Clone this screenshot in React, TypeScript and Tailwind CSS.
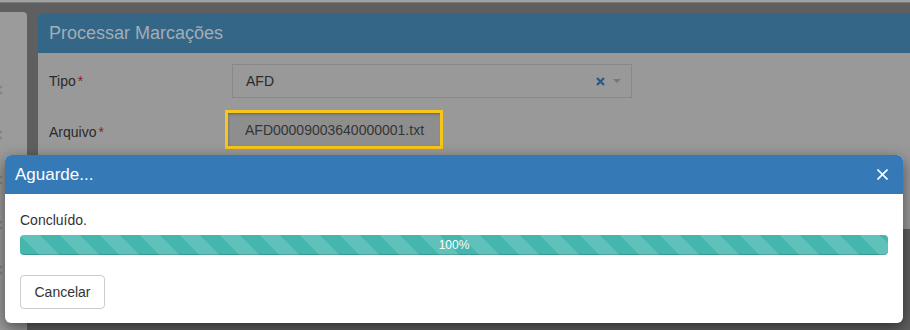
import React from "react";

const ChevronFaint = () => (
  <svg width="8" height="10" viewBox="0 0 8 10" className="-ml-[4px]">
    <path d="M6 1 L2 5 L6 9" fill="none" stroke="#7c7c7c" strokeWidth="1.3" />
  </svg>
);

export default function App() {
  return (
    <div className="relative w-[910px] h-[330px] overflow-hidden bg-[#5f5f5f] font-['Liberation_Sans',Arial,sans-serif]">
      <div className="h-[2px] bg-[#a2a2a2]" />
      <div className="h-[1px] bg-[#7c7c7c]" />

      <div className="flex gap-[11px] pt-[9px]">
        {/* collapsed side menu */}
        <aside className="w-[27px] h-[320px] shrink-0 bg-[#9b9b9b] rounded-tr-[4px] flex flex-col gap-[35px] pt-[73px]">
          <ChevronFaint />
          <ChevronFaint />
          <ChevronFaint />
          <ChevronFaint />
          <ChevronFaint />
        </aside>

        {/* main panel, dimmed behind the modal */}
        <section className="flex-1 mt-[1px] h-[216px] rounded-tl-[4px] bg-[#999999] overflow-hidden">
          <header className="h-[40px] bg-[#346688] flex items-center px-[11px]">
            <h1 className="text-[18px] leading-none text-[#a3adb5]">
              Processar Marcações
            </h1>
          </header>

          <div className="px-[11px] pt-[11px]">
            <div className="flex items-center">
              <label className="w-[183px] text-[14px] leading-[20px] text-[#2a2a2a]">
                Tipo<span className="text-[#8a2222] ml-[2px]">*</span>
              </label>
              <div className="w-[400px] h-[34px] border border-[#888888] flex items-center pl-[13px] pr-[10px]">
                <span className="flex-1 text-[14px] text-[#2a2a2a]">AFD</span>
                <svg width="9" height="9" viewBox="0 0 9 9" className="mr-[8px]">
                  <path d="M1 1 L8 8 M8 1 L1 8" stroke="#2c5781" strokeWidth="2.2" />
                </svg>
                <span className="w-0 h-0 border-x-[4px] border-x-transparent border-t-[4px] border-t-[#777777]" />
              </div>
            </div>

            <div className="flex items-start mt-[12px]">
              <label className="w-[176px] pt-[12px] text-[14px] leading-[20px] text-[#2a2a2a]">
                Arquivo<span className="text-[#8a2222] ml-[2px]">*</span>
              </label>
              <div className="w-[218px] h-[39px] border-[3px] border-[#f7c61b]">
                <div className="h-full bg-[#8e8e8e] border-t border-t-[#9c5c5c] shadow-[inset_1px_1px_2px_rgba(0,0,0,0.15)] flex items-center pl-[17px] text-[14px] text-[#353535]">
                  AFD00009003640000001.txt
                </div>
              </div>
            </div>
          </div>
        </section>
      </div>

      {/* modal */}
      <div className="absolute left-[5px] top-[155px] w-[898px] h-[168px] rounded-[6px] bg-white overflow-hidden shadow-[0_5px_15px_rgba(0,0,0,0.5)]">
        <div className="h-[39px] bg-[#357ab7] flex items-center justify-between pl-[10px] pr-[15px]">
          <h2 className="text-[17px] leading-none text-white">Aguarde...</h2>
          <svg width="11" height="11" viewBox="0 0 11 11">
            <path d="M0.5 0.5 L10.5 10.5 M10.5 0.5 L0.5 10.5" stroke="#ffffff" strokeWidth="1.6" />
          </svg>
        </div>

        <div className="px-[15px] pt-[16px]">
          <p className="text-[14px] leading-[20px] text-[#333333]">Concluído.</p>
          <div className="mt-[5px] h-[20px] rounded-[4px] bg-[#44b6ae] bg-[linear-gradient(45deg,rgba(255,255,255,.15)_25%,transparent_25%,transparent_50%,rgba(255,255,255,.15)_50%,rgba(255,255,255,.15)_75%,transparent_75%,transparent)] bg-[length:40px_40px] shadow-[inset_0_-1px_0_rgba(0,0,0,0.15)] flex items-center justify-center">
            <span className="text-[12px] leading-[20px] text-white">100%</span>
          </div>
          <button className="mt-[20px] h-[34px] w-[85px] rounded-[4px] border border-[#cccccc] bg-white text-[14px] text-[#333333]">
            Cancelar
          </button>
        </div>
      </div>
    </div>
  );
}
